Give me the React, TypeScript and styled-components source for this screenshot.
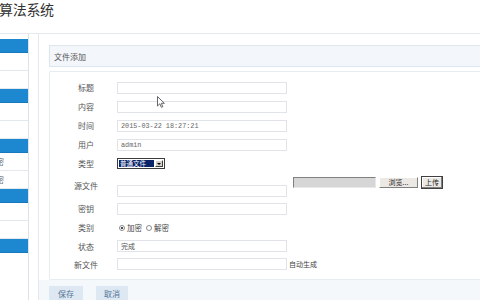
import React from 'react';
import styled, { createGlobalStyle } from 'styled-components';

const GlobalStyle = createGlobalStyle`
  *, *::before, *::after { box-sizing: border-box; }
  html, body { margin: 0; padding: 0; background: #ffffff; }
  body {
    width: 480px;
    height: 300px;
    overflow: hidden;
    font-family: "Noto Sans CJK SC", "Noto Sans", sans-serif;
    color: #333;
  }
`;

const Page = styled.div`
  position: relative;
  width: 480px;
  height: 300px;
  display: flex;
  flex-direction: column;
  overflow: hidden;
`;

const TopBar = styled.header`
  height: 34px;
  flex: none;
  border-bottom: 1px solid #e4e9ee;
  padding-top: 1px;
`;

const Title = styled.h1`
  margin: 0 0 0 -1px;
  font-size: 14px;
  line-height: 16px;
  font-weight: 400;
  letter-spacing: -0.3px;
  color: #333;
  white-space: nowrap;
`;

const Body = styled.div`
  flex: 1;
  display: flex;
  min-height: 0;
`;

const Sidebar = styled.nav`
  width: 29px;
  flex: none;
  padding-top: 5px;
  border-right: 1px solid #dbe2e9;
  background: #fff;
`;

const GroupHead = styled.div`
  height: 14px;
  background: #1d87d0;
  border-bottom: 1px solid #1878bd;
`;

// the menu is scrolled sideways in the shot: only the tail of a label peeks in
const NavItem = styled.div`
  height: 18px;
  border-bottom: 1px solid #e3e8ed;
  display: flex;
  align-items: center;
  justify-content: flex-end;
  overflow: hidden;
  padding-right: 24px;
  font-size: 8px;
  color: #666;
  white-space: nowrap;
`;

const Main = styled.main`
  flex: 1;
  min-width: 0;
  margin-left: 9px;
  border-left: 1px solid #e3e8ee;
  padding: 11px 0 0 10px;
  display: flex;
  flex-direction: column;
`;

const Band = styled.div`
  height: 22px;
  flex: none;
  display: flex;
  align-items: center;
  padding-left: 4px;
  background: #f3f7fb;
  border: 1px solid #dde5ed;
  border-right: none;
  font-size: 8px;
  color: #555;
`;

const FormBox = styled.div`
  margin-top: 4px;
  height: 209px;
  flex: none;
  border: 1px solid #e7ecf1;
  border-right: none;
  border-radius: 2px 0 0 2px;
  padding-top: 6px;
  display: flex;
  flex-direction: column;
`;

const Row = styled.div<{ $h?: number; $bottom?: boolean }>`
  height: ${({ $h }) => $h ?? 19}px;
  display: flex;
  align-items: ${({ $bottom }) => ($bottom ? 'flex-end' : 'center')};
  padding-bottom: ${({ $bottom }) => ($bottom ? '2px' : '0')};
`;

const Label = styled.span`
  width: 52px;
  margin: 0 5px 0 10px;
  align-self: center;
  text-align: center;
  font-size: 8px;
  color: #555;
  white-space: nowrap;
`;

const Field = styled.input`
  width: 170px;
  height: 12px;
  flex: none;
  margin: 0;
  padding: 0 3px;
  border: 1px solid #e0e4e9;
  background: #fff;
  font-family: "Liberation Mono", monospace;
  font-size: 6.8px;
  color: #666;
  outline: none;
`;

const CjkField = styled(Field)`
  font-family: "Noto Sans CJK SC", sans-serif;
  font-size: 7px;
  color: #555;
`;

const Select = styled.div`
  width: 48px;
  height: 11px;
  display: flex;
  border: 1px solid #3c3c3c;
  background: #fff;
  padding: 1px;
`;

const SelectValue = styled.span`
  flex: 1;
  background: #0a246a;
  color: #fff;
  font-size: 6.5px;
  line-height: 7px;
  padding-left: 1px;
  white-space: nowrap;
`;

const SelectArrow = styled.span`
  width: 8px;
  margin-left: 1px;
  background: #d4d0c8;
  border: 1px solid;
  border-color: #fff #404040 #404040 #fff;
  display: flex;
  align-items: center;
  justify-content: center;

  &::after {
    content: '';
    border-left: 2px solid transparent;
    border-right: 2px solid transparent;
    border-top: 2px solid #000;
  }
`;

const Upload = styled.div`
  margin-left: 6px;
  align-self: center;
  display: flex;
  align-items: center;
  gap: 3px;
  padding-bottom: 6px;
`;

const FileBox = styled.span`
  width: 83px;
  height: 11px;
  background: #d6d6d6;
  border: 1px solid;
  border-color: #808080 #e8e8e8 #e8e8e8 #808080;
`;

const ClassicButton = styled.span<{ $w: number; $strong?: boolean }>`
  width: ${({ $w }) => $w}px;
  height: ${({ $strong }) => ($strong ? 13 : 11)}px;
  display: flex;
  align-items: center;
  justify-content: center;
  background: #ece9e4;
  border: 1px solid;
  border-color: ${({ $strong }) =>
    $strong ? '#404040' : '#ffffff #808080 #808080 #ffffff'};
  box-shadow: ${({ $strong }) => ($strong ? 'inset -1px -1px 0 #808080, inset 1px 1px 0 #fff' : 'none')};
  font-size: 7px;
  color: #222;
  white-space: nowrap;
`;

const RadioGroup = styled.div`
  display: flex;
  align-items: center;
  margin-left: 2px;
  font-size: 7.5px;
  color: #444;
`;

const Radio = styled.span<{ $on?: boolean }>`
  width: 6px;
  height: 6px;
  border-radius: 50%;
  border: 1px solid #8a8a8a;
  background: #fff;
  display: inline-flex;
  align-items: center;
  justify-content: center;
  margin-right: 2px;

  &::after {
    content: '';
    width: 2px;
    height: 2px;
    border-radius: 50%;
    background: ${({ $on }) => ($on ? '#111' : 'transparent')};
  }
`;

const RadioText = styled.span`
  margin-right: 4px;
`;

const Hint = styled.span`
  margin-left: 2px;
  font-size: 7px;
  color: #444;
  white-space: nowrap;
`;

const Footer = styled.div`
  flex: 1;
  margin-left: -10px;
  padding: 6px 0 0 10px;
  background: #f5f8fb;
  display: flex;
  gap: 13px;
  align-items: flex-start;
`;

const ActionButton = styled.span<{ $w: number }>`
  width: ${({ $w }) => $w}px;
  height: 14px;
  display: flex;
  align-items: center;
  justify-content: center;
  background: #dde8f3;
  font-size: 8px;
  color: #557493;
`;

const Cursor = styled.svg`
  position: absolute;
  left: 157px;
  top: 96px;
`;

const navGroups: string[][] = [
  ['', ''],
  ['', ''],
  ['文件加密', '文件解密'],
  ['', ''],
];

export default function App() {
  return (
    <>
      <GlobalStyle />
      <Page>
        <TopBar>
          <Title>算法系统</Title>
        </TopBar>
        <Body>
          <Sidebar>
            {navGroups.map((items, gi) => (
              <div key={gi}>
                <GroupHead />
                {items.map((t, ii) => (
                  <NavItem key={ii}>{t}</NavItem>
                ))}
              </div>
            ))}
            <GroupHead />
          </Sidebar>
          <Main>
            <Band>文件添加</Band>
            <FormBox>
              <Row>
                <Label>标题</Label>
                <Field readOnly defaultValue="" />
              </Row>
              <Row>
                <Label>内容</Label>
                <Field readOnly defaultValue="" />
              </Row>
              <Row>
                <Label>时间</Label>
                <Field readOnly defaultValue="2015-03-22 18:27:21" />
              </Row>
              <Row>
                <Label>用户</Label>
                <Field readOnly defaultValue="admin" />
              </Row>
              <Row>
                <Label>类型</Label>
                <Select>
                  <SelectValue>普通文件</SelectValue>
                  <SelectArrow />
                </Select>
              </Row>
              <Row $h={26} $bottom>
                <Label>源文件</Label>
                <Field readOnly defaultValue="" />
                <Upload>
                  <FileBox />
                  <ClassicButton $w={39}>浏览...</ClassicButton>
                  <ClassicButton $w={22} $strong>
                    上传
                  </ClassicButton>
                </Upload>
              </Row>
              <Row>
                <Label>密钥</Label>
                <Field readOnly defaultValue="" />
              </Row>
              <Row>
                <Label>类别</Label>
                <RadioGroup>
                  <Radio $on />
                  <RadioText>加密</RadioText>
                  <Radio />
                  <RadioText>解密</RadioText>
                </RadioGroup>
              </Row>
              <Row $h={18}>
                <Label>状态</Label>
                <CjkField readOnly defaultValue="完成" />
              </Row>
              <Row $h={18}>
                <Label>新文件</Label>
                <Field readOnly defaultValue="" />
                <Hint>自动生成</Hint>
              </Row>
            </FormBox>
            <Footer>
              <ActionButton $w={34}>保存</ActionButton>
              <ActionButton $w={32}>取消</ActionButton>
            </Footer>
          </Main>
        </Body>
        <Cursor width="8" height="12" viewBox="0 0 8 12">
          <path d="M0.5 0.5 L0.5 10 L2.8 7.8 L4.4 11.3 L5.8 10.7 L4.3 7.3 L7.4 7.3 Z" fill="#fff" stroke="#555" strokeWidth="0.9" />
        </Cursor>
      </Page>
    </>
  );
}
